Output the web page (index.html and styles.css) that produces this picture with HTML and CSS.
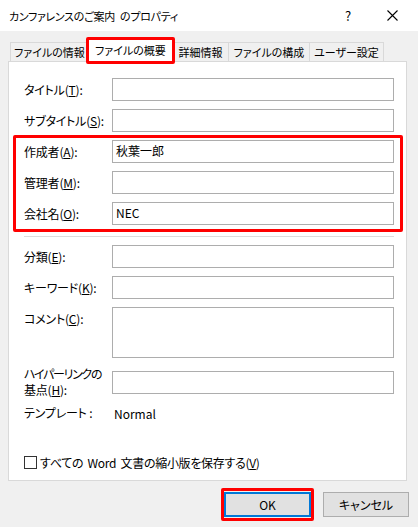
FILE: index.html
```html
<!DOCTYPE html>
<html lang="ja">
<head>
<meta charset="utf-8">
<title>プロパティ</title>
<link rel="stylesheet" href="styles.css">
</head>
<body>
<div class="window">
  <div class="titlebar">
    <span class="title">カンファレンスのご案内 のプロパティ</span>
    <span class="help">?</span>
    <span class="close"><svg width="11" height="11" viewBox="0 0 11 11"><path d="M0.5 0.5L10.5 10.5M10.5 0.5L0.5 10.5" stroke="#000" stroke-width="1.1" fill="none"/></svg></span>
  </div>
  <div class="tabs">
    <div class="tab t1">ファイルの情報</div>
    <div class="tab active t2">ファイルの概要</div>
    <div class="tab t3">詳細情報</div>
    <div class="tab t4">ファイルの構成</div>
    <div class="tab t5">ユーザー設定</div>
  </div>
  <div class="panel">
    <div class="row"><label>タイトル(<u>T</u>):</label><div class="field"></div></div>
    <div class="row"><label>サブタイトル(<u>S</u>):</label><div class="field"></div></div>
    <div class="highlight">
      <div class="row"><label>作成者(<u>A</u>):</label><div class="field">秋葉一郎</div></div>
      <div class="row"><label>管理者(<u>M</u>):</label><div class="field"></div></div>
      <div class="row last"><label>会社名(<u>O</u>):</label><div class="field">NEC</div></div>
    </div>
    <div class="sep"></div>
    <div class="row"><label>分類(<u>E</u>):</label><div class="field"></div></div>
    <div class="row"><label>キーワード(<u>K</u>):</label><div class="field"></div></div>
    <div class="row top"><label>コメント(<u>C</u>):</label><div class="field tall"></div></div>
    <div class="row link"><label><span class="narrow">ハイパーリンクの</span><br>基点(<u>H</u>):</label><div class="field"></div></div>
    <div class="row template"><label>テンプレート :</label><div class="value">Normal</div></div>
    <div class="check"><span class="box"></span><span class="check-text">すべての Word 文書の縮小版を保存する(<u>V</u>)</span></div>
  </div>
  <div class="buttons">
    <div class="btn ok">OK</div>
    <div class="btn">キャンセル</div>
  </div>
</div>
</body>
</html>
```
FILE: styles.css
```css
* { box-sizing: border-box; }
html, body { margin: 0; padding: 0; }
body {
  width: 418px;
  height: 527px;
  overflow: hidden;
  background: #f0f0f0;
  font-family: "Noto Sans CJK JP", "Noto Sans", sans-serif;
  font-feature-settings: "palt";
  font-size: 12px;
  color: #000;
}
.window { width: 418px; height: 527px; }
.titlebar {
  height: 31px;
  background: #fff;
  display: flex;
  align-items: center;
  padding-left: 9px;
}
.title { flex: 1; font-size: 11px; letter-spacing: -0.3px; word-spacing: 3px; }
.help { width: 20px; text-align: center; margin-right: 29px; font-size: 13px; }
.close { width: 11px; height: 11px; display: flex; margin-right: 20px; }
.tabs {
  display: flex;
  align-items: flex-end;
  padding-left: 10px;
  padding-top: 8px;
  height: 30px;
  position: relative;
  z-index: 1;
}
.tab {
  height: 19px;
  line-height: 18px;
  border: 1px solid #d9d9d9;
  border-bottom: none;
  background: #f0f0f0;
  text-align: center;
  margin-right: -1px;
  font-size: 11px;
  white-space: nowrap;
}
.t1 { width: 79px; }
.t3 { width: 57px; }
.t4 { width: 82px; }
.t5 { width: 75px; }
.tab.active {
  width: 85px;
  height: 23px;
  line-height: 20px;
  background: #fff;
  margin-bottom: -1px;
  position: relative;
  z-index: 2;
}
.tab.active::after {
  content: "";
  position: absolute;
  top: -3px;
  left: -3px;
  right: -3px;
  bottom: -2px;
  border: 3px solid #ff0000;
  border-radius: 2px;
}
.panel {
  margin: 0 11px 0 8px;
  height: 420px;
  background: #fff;
  border: 1px solid #d9d9d9;
  padding: 16px 12px 0 15px;
}
.row {
  display: grid;
  grid-template-columns: 88px 1fr;
  align-items: center;
  margin-bottom: 8px;
}
.row.last { margin-bottom: 0; }
.row.top { align-items: start; margin-bottom: 8px; }
.row.top label { padding-top: 4px; }
label { line-height: 16px; white-space: nowrap; letter-spacing: -0.2px; }
.narrow { letter-spacing: -1.3px; }
.field {
  height: 23px;
  border: 1px solid #adadad;
  background: #fff;
  padding: 0 3px;
  line-height: 20px;
}
.field.tall { height: 51px; }
.highlight { position: relative; }
.highlight::before {
  content: "";
  position: absolute;
  top: -5px;
  left: -11px;
  right: -9px;
  bottom: -7px;
  border: 3px solid #ff0000;
  border-radius: 2px;
}
.sep {
  height: 1px;
  background: #dcdcdc;
  margin: 11px 0 8px;
}
.row.link { margin-bottom: 5px; }
.row.template { height: 20px; margin-bottom: 0; }
.value { padding-left: 2px; }
.check {
  display: flex;
  align-items: center;
  margin-top: 33px;
  height: 13px;
}
.check-text { letter-spacing: -0.3px; word-spacing: 2px; }
.box {
  width: 13px;
  height: 13px;
  border: 1px solid #333;
  background: #fff;
  margin-right: 3px;
}
.buttons {
  display: flex;
  justify-content: flex-end;
  padding-right: 9px;
  margin-top: 11px;
  gap: 12px;
}
.btn {
  width: 86px;
  height: 25px;
  border: 1px solid #adadad;
  background: #e1e1e1;
  display: flex;
  align-items: center;
  justify-content: center;
  font-size: 12px;
}
.btn.ok {
  width: 87px;
  border: 2px solid #0078d7;
  position: relative;
}
.btn.ok::after {
  content: "";
  position: absolute;
  top: -6px;
  left: -5px;
  right: -5px;
  bottom: -6px;
  border: 3px solid #ff0000;
  border-radius: 2px;
}
```
